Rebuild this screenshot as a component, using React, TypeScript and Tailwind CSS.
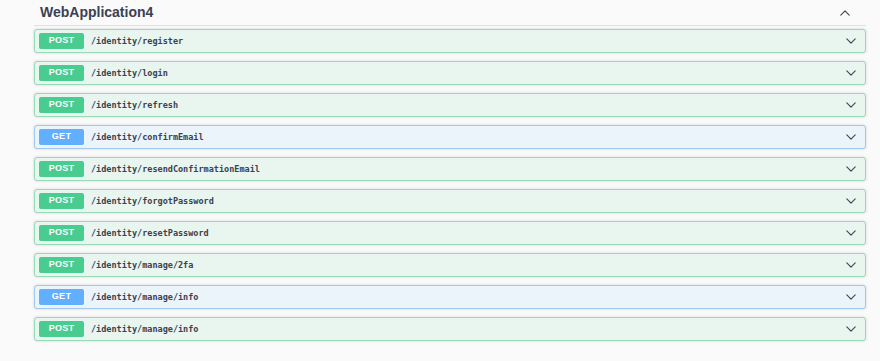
import React from 'react';

type Op = { method: 'POST' | 'GET'; path: string };

const ops: Op[] = [
  { method: 'POST', path: '/identity/register' },
  { method: 'POST', path: '/identity/login' },
  { method: 'POST', path: '/identity/refresh' },
  { method: 'GET', path: '/identity/confirmEmail' },
  { method: 'POST', path: '/identity/resendConfirmationEmail' },
  { method: 'POST', path: '/identity/forgotPassword' },
  { method: 'POST', path: '/identity/resetPassword' },
  { method: 'POST', path: '/identity/manage/2fa' },
  { method: 'GET', path: '/identity/manage/info' },
  { method: 'POST', path: '/identity/manage/info' },
];

const Chevron = ({ up = false }: { up?: boolean }) => (
  <svg width="12" height="12" viewBox="0 0 20 20" className={up ? 'rotate-180' : ''}>
    <path d="M3 6.5l7 7 7-7" fill="none" stroke="#3b4151" strokeWidth="1.8" strokeLinecap="round" strokeLinejoin="round" />
  </svg>
);

const OpBlock = ({ op }: { op: Op }) => {
  const isGet = op.method === 'GET';
  return (
    <div
      className={
        isGet
          ? 'flex items-center h-[24px] rounded-[3px] border border-[#9fc9f1] bg-[#ebf3fb] shadow-[0_0_3px_rgba(0,0,0,0.15)] pl-[4px] pr-[8px]'
          : 'flex items-center h-[24px] rounded-[3px] border border-[#97d9b9] bg-[#e8f6ef] shadow-[0_0_3px_rgba(0,0,0,0.15)] pl-[4px] pr-[8px]'
      }
    >
      <span
        className={
          isGet
            ? 'w-[45px] h-[16px] flex items-center justify-center rounded-[2px] bg-[#61affe] text-white text-[9px] font-bold tracking-[0.3px]'
            : 'w-[45px] h-[16px] flex items-center justify-center rounded-[2px] bg-[#49cc90] text-white text-[9px] font-bold tracking-[0.3px]'
        }
        style={{ fontFamily: '"Liberation Sans", Arial, sans-serif' }}
      >
        {op.method}
      </span>
      <span
        className="ml-[7px] flex-1 text-[8.5px] font-bold text-[#3b4151]"
        style={{ fontFamily: '"DejaVu Sans Mono", monospace' }}
      >
        {op.path}
      </span>
      <Chevron />
    </div>
  );
};

export default function App() {
  return (
    <div className="w-[880px] h-[361px] bg-[#fafafa] pl-[34px] pr-[14px] overflow-hidden">
      <div className="flex items-center justify-between h-[26px] border-b border-[#dfe0e3] pl-[6px] pr-[15px]">
        <h3
          className="text-[14px] font-bold text-[#3b4151]"
          style={{ fontFamily: '"Liberation Sans", Arial, sans-serif' }}
        >
          WebApplication4
        </h3>
        <Chevron up />
      </div>
      <div className="flex flex-col gap-[8px] pt-[3px]">
        {ops.map((op, i) => (
          <OpBlock key={i} op={op} />
        ))}
      </div>
    </div>
  );
}
